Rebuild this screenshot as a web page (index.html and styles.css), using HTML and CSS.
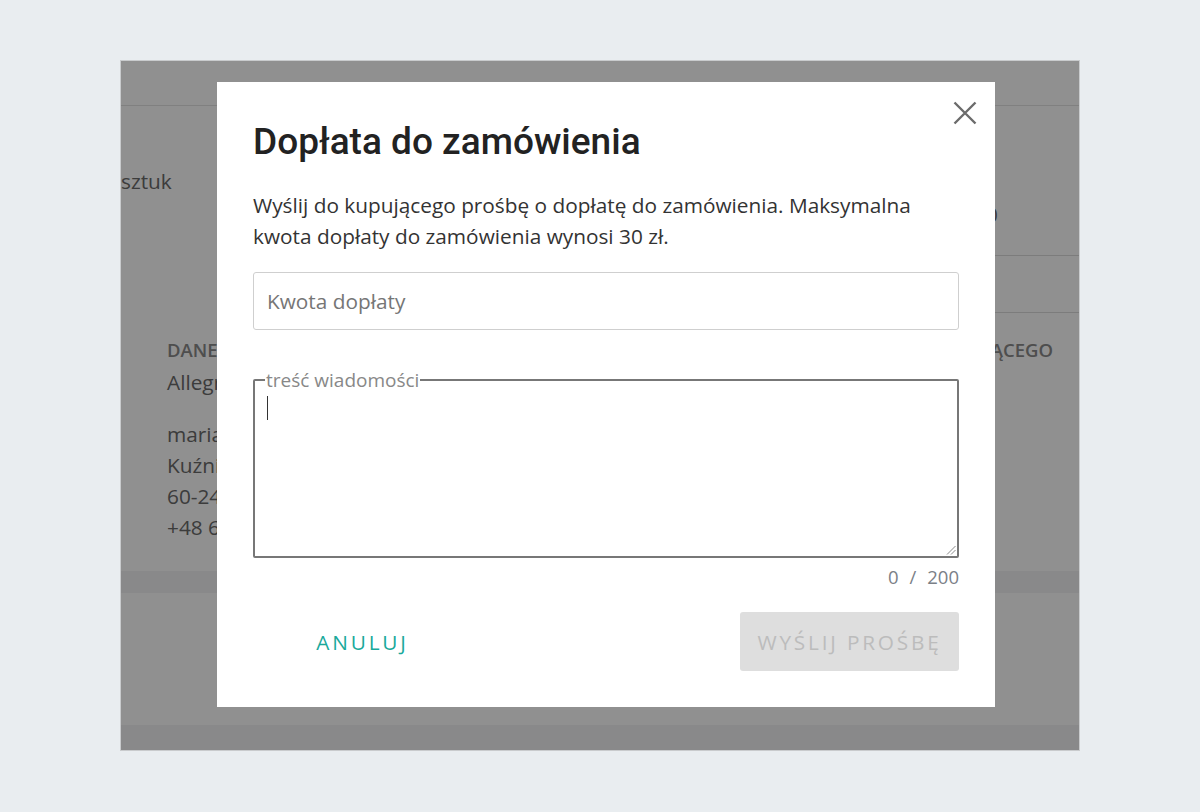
FILE: index.html
```html
<!DOCTYPE html>
<html lang="pl">
<head>
<meta charset="utf-8">
<title>Dopłata do zamówienia</title>
<link rel="stylesheet" href="styles.css">
</head>
<body>
<div class="frame">
  <div class="page">
    <div class="page-header"></div>
    <div class="page-top">
      <div class="top-left">sztuk</div>
      <div class="top-right">
        <div class="cell cell-1">0</div>
        <div class="cell cell-2"></div>
      </div>
    </div>
    <div class="page-data">
      <div class="data-col">
        <div class="data-title">DANE DO WYSYŁKI</div>
        <div class="data-line">Allegro Paczkomaty</div>
        <div class="data-gap"></div>
        <div class="data-line">maria kowalska</div>
        <div class="data-line">Kuźnicza 12</div>
        <div class="data-line">60-241 Poznań</div>
        <div class="data-line">+48 600 000 000</div>
      </div>
      <div class="data-col data-col-right">
        <div class="data-title">DANE KUPUJĄCEGO</div>
      </div>
    </div>
    <div class="band"></div>
    <div class="page-footer"></div>
    <div class="band band-bottom"></div>
  </div>
  <div class="overlay"></div>
  <div class="modal">
    <button class="close" aria-label="Zamknij">
      <svg width="24" height="24" viewBox="0 0 24 24"><path d="M1.5 1.5L22.5 22.5M22.5 1.5L1.5 22.5" stroke="#6b6b6b" stroke-width="2.4" fill="none"/></svg>
    </button>
    <h1 class="modal-title">Dopłata do zamówienia</h1>
    <p class="modal-desc">Wyślij do kupującego prośbę o dopłatę do zamówienia. Maksymalna<br>kwota dopłaty do zamówienia wynosi 30 zł.</p>
    <div class="input">Kwota dopłaty</div>
    <fieldset class="message">
      <legend>treść wiadomości</legend>
      <div class="message-body">
        <span class="caret"></span>
        <svg class="resize" width="10" height="10" viewBox="0 0 10 10"><path d="M9.5 1L1 9.5M9.5 5L5 9.5" stroke="#8a8a8a" stroke-width="1" fill="none"/></svg>
      </div>
    </fieldset>
    <div class="counter">0<span class="slash">/</span>200</div>
    <div class="actions">
      <button class="btn btn-cancel">ANULUJ</button>
      <button class="btn btn-send" disabled>WYŚLIJ PROŚBĘ</button>
    </div>
  </div>
</div>
</body>
</html>
```
FILE: styles.css
```css
* { box-sizing: border-box; }
html, body { margin: 0; padding: 0; }
body {
  background: #e9edf0;
  font-family: "Open Sans", "Liberation Sans", sans-serif;
  width: 1200px;
  height: 812px;
  overflow: hidden;
  padding-top: 60px;
  padding-left: 120px;
}
.frame {
  position: relative;
  width: 960px;
  height: 691px;
  border: 1px solid #c9cbcd;
  background: #fff;
  overflow: hidden;
}
.page { display: flex; flex-direction: column; height: 100%; color: #666; }
.page-header { height: 45px; border-bottom: 1px solid #e2e2e2; flex: none; }
.page-top { display: flex; justify-content: space-between; flex: none; }
.top-left { padding-top: 62px; font-size: 20.8px; line-height: 26px; color: #6a6a6a; }
.top-right { width: 330px; }
.cell { border-bottom: 1px solid #dcdcdc; }
.cell-1 { height: 150px; padding-top: 95px; padding-right: 81px; text-align: right; font-size: 20.8px; line-height: 26px; color: #6a6a6a; }
.cell-2 { height: 57px; }
.page-data { display: flex; justify-content: space-between; padding: 25px 26px 0 46px; height: 258px; flex: none; }
.data-title { font-size: 18.5px; font-weight: 600; line-height: 24px; color: #8a8a8a; }
.data-line { font-size: 20.8px; line-height: 31px; color: #6a6a6a; }
.data-title + .data-line { margin-top: 5px; }
.data-gap { height: 21px; }
.band { height: 22px; background: #f2f3f4; flex: none; }
.page-footer { height: 132px; flex: none; }
.band-bottom { height: 26px; }
.overlay { position: absolute; inset: 0; background: rgba(0, 0, 0, 0.435); }
.modal {
  position: absolute;
  left: 96px;
  top: 21px;
  width: 778px;
  height: 625px;
  background: #fff;
  padding: 40px 36px 0 36px;
  display: flex;
  flex-direction: column;
}
.close {
  position: absolute;
  top: 19px;
  right: 18px;
  width: 24px;
  height: 24px;
  padding: 0;
  border: 0;
  background: none;
  display: flex;
}
.modal-title {
  margin: 0;
  font-family: Roboto, "Open Sans", sans-serif;
  font-weight: 500;
  font-size: 37px;
  line-height: 40px;
  color: #222;
}
.modal-desc {
  margin: 28px 0 0 0;
  font-size: 20.8px;
  line-height: 31px;
  color: #333;
}
.input {
  margin-top: 20px;
  height: 58px;
  border: 1px solid #cfcfcf;
  border-radius: 3px;
  padding: 0 13px;
  display: flex;
  align-items: center;
  font-size: 20.8px;
  color: #767676;
}
.message {
  margin: 39px 0 0 0;
  padding: 0;
  border: 2px solid #777;
  border-radius: 2px;
  min-width: 0;
}
.message legend {
  margin-left: 10px;
  padding: 0 1px;
  font-size: 19px;
  line-height: 22px;
  color: #888;
}
.message-body { position: relative; height: 165px; padding: 5px 0 0 12px; }
.caret { display: block; width: 1px; height: 24px; background: #333; }
.resize { position: absolute; right: 1px; bottom: 1px; }
.counter {
  margin-top: 8px;
  text-align: right;
  font-size: 18.5px;
  line-height: 22px;
  color: #7b8087;
}
.slash { margin: 0 11px; }
.actions {
  margin-top: 24px;
  display: flex;
  justify-content: space-between;
}
.btn {
  width: 219px;
  height: 59px;
  border: 0;
  border-radius: 3px;
  font-family: "Open Sans", sans-serif;
  font-size: 20.8px;
  letter-spacing: 2.8px;
  padding: 0;
}
.btn-cancel { background: #fff; color: #1aa99b; }
.btn-send { background: #dedede; color: #bcbcbc; }
```
